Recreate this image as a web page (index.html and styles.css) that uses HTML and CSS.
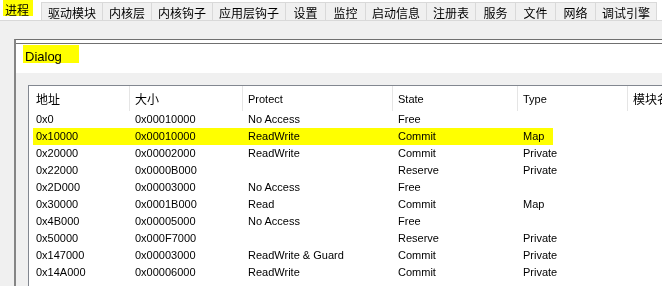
FILE: index.html
```html
<!DOCTYPE html>
<html lang="zh-CN">

<head>
    <meta charset="UTF-8">
    <meta name="viewport" content="width=device-width, initial-scale=1.0">
    <title>Dialog</title>
    <link rel="stylesheet" href="styles.css">
</head>

<body>
    <div class="tabs">
        <div class="tab active"><span class="mark">进程</span></div>
        <div class="tab">驱动模块</div>
        <div class="tab">内核层</div>
        <div class="tab">内核钩子</div>
        <div class="tab">应用层钩子</div>
        <div class="tab">设置</div>
        <div class="tab">监控</div>
        <div class="tab">启动信息</div>
        <div class="tab">注册表</div>
        <div class="tab">服务</div>
        <div class="tab">文件</div>
        <div class="tab">网络</div>
        <div class="tab">调试引擎</div>
    </div>

    <div class="dialog">
        <div class="dialog-title"><span class="mark">Dialog</span></div>
        <div class="dialog-body">
            <div class="list">
                <div class="row-mark"></div>
                <table>
                    <thead>
                        <tr>
                            <th class="c1 cjk">地址</th>
                            <th class="c2 cjk">大小</th>
                            <th class="c3">Protect</th>
                            <th class="c4">State</th>
                            <th class="c5">Type</th>
                            <th class="c6 cjk">模块名</th>
                        </tr>
                    </thead>
                    <tbody>
                        <tr><td>0x0</td><td>0x00010000</td><td>No Access</td><td>Free</td><td></td><td></td></tr>
                        <tr><td>0x10000</td><td>0x00010000</td><td>ReadWrite</td><td>Commit</td><td>Map</td><td></td></tr>
                        <tr><td>0x20000</td><td>0x00002000</td><td>ReadWrite</td><td>Commit</td><td>Private</td><td></td></tr>
                        <tr><td>0x22000</td><td>0x0000B000</td><td></td><td>Reserve</td><td>Private</td><td></td></tr>
                        <tr><td>0x2D000</td><td>0x00003000</td><td>No Access</td><td>Free</td><td></td><td></td></tr>
                        <tr><td>0x30000</td><td>0x0001B000</td><td>Read</td><td>Commit</td><td>Map</td><td></td></tr>
                        <tr><td>0x4B000</td><td>0x00005000</td><td>No Access</td><td>Free</td><td></td><td></td></tr>
                        <tr><td>0x50000</td><td>0x000F7000</td><td></td><td>Reserve</td><td>Private</td><td></td></tr>
                        <tr><td>0x147000</td><td>0x00003000</td><td>ReadWrite &amp; Guard</td><td>Commit</td><td>Private</td><td></td></tr>
                        <tr><td>0x14A000</td><td>0x00006000</td><td>ReadWrite</td><td>Commit</td><td>Private</td><td></td></tr>
                    </tbody>
                </table>
            </div>
        </div>
    </div>
</body>

</html>
```

FILE: styles.css
```css
body {
    margin: 0;
    width: 662px;
    height: 286px;
    overflow: hidden;
    background-color: #f0f0f0;
    font-family: "Liberation Sans", "Noto Sans CJK SC", sans-serif;
    font-size: 11px;
    color: #000;
}

.cjk {
    font-family: "Noto Sans CJK SC", sans-serif;
    font-size: 12px;
}

.mark {
    background-color: #ffff00;
}

/* tab strip */
.tabs {
    display: flex;
    align-items: flex-start;
    height: 20px;
    background-color: #fff;
    border-bottom: 1px solid #d9d9d9;
    font-family: "Noto Sans CJK SC", sans-serif;
    font-size: 12px;
}

.tab {
    box-sizing: border-box;
    height: 18px;
    min-width: 41px;
    margin-top: 2px;
    margin-left: -1px;
    padding: 3px 6px 0 6px;
    line-height: 14px;
    text-align: center;
    white-space: nowrap;
    background-color: #f0f0f0;
    border: 1px solid #d9d9d9;
    border-bottom: none;
}

.tab.active {
    height: 20px;
    width: 42px;
    margin-top: 0;
    margin-left: 0;
    padding: 0;
    text-align: left;
    background-color: #fff;
    border: none;
}

.tab.active .mark {
    display: inline-block;
    margin-left: 3px;
    padding: 3px 4px 0 2px;
    line-height: 13px;
}

/* dialog */
.dialog {
    width: 720px;
    height: 260px;
    margin: 18px 0 0 14px;
    padding-top: 3px;
    background-color: #fff;
    border-top: 1px solid #707070;
    border-left: 2px solid #858585;
}

.dialog-title {
    height: 29px;
    border-top: 1px solid #707070;
    font-size: 13px;
}

.dialog-title .mark {
    display: inline-block;
    height: 18px;
    margin: 1px 0 0 7px;
    padding: 0 17px 0 2px;
    box-sizing: border-box;
    padding-top: 6px;
    line-height: 12px;
}

.dialog-body {
    height: 100%;
    padding: 12px 0 0 12px;
    background-color: #f0f0f0;
}

.list {
    position: relative;
    height: 240px;
    background-color: #fff;
    border: 1px solid #828790;
}

.row-mark {
    position: absolute;
    left: 4px;
    top: 42px;
    width: 520px;
    height: 17px;
    background-color: #ffff00;
    mix-blend-mode: multiply;
    z-index: 1;
}

table {
    table-layout: fixed;
    border-collapse: separate;
    border-spacing: 0;
    width: 749px;
}

th,
td {
    box-sizing: border-box;
    padding: 0 0 0 5px;
    text-align: left;
    white-space: nowrap;
    overflow: hidden;
}

th {
    height: 25px;
    font-weight: normal;
    border-right: 1px solid #e5e5e5;
}

td {
    height: 17px;
    line-height: 17px;
}

th.c1,
td:first-child {
    padding-left: 7px;
}

.c1 { width: 101px; }
.c2 { width: 113px; }
.c3 { width: 150px; }
.c4 { width: 125px; }
.c5 { width: 110px; }
.c6 { width: 150px; }
```
